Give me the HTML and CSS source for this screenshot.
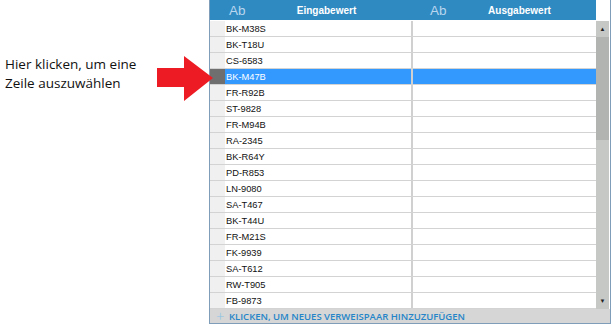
FILE: index.html
```html
<!DOCTYPE html>
<html lang="de">
<head>
    <meta charset="UTF-8">
    <title>Verweistabelle</title>
    <link rel="stylesheet" href="styles.css">
</head>
<body>

    <div class="page">
        <div class="note">
            <p>Hier klicken, um eine<br>Zeile auszuwählen</p>
        </div>

        <svg class="arrow" width="56" height="46" viewBox="0 0 56 46">
            <polygon points="0,12 27,12 27,0 56,22 27,45 27,31 0,31" fill="#ed1c24"/>
        </svg>

        <div class="grid">
            <div class="grid-head">
                <div class="head-cell col-in"><span class="ab">Ab</span><span class="head-title">Eingabewert</span></div>
                <div class="head-cell col-out"><span class="ab">Ab</span><span class="head-title">Ausgabewert</span></div>
                <div class="head-corner"></div>
            </div>
            <div class="grid-body">
                <div class="rows">
                    <div class="row"><span class="gutter"></span><span class="cell col-in">BK-M38S</span><span class="cell col-out"></span></div>
                    <div class="row"><span class="gutter"></span><span class="cell col-in">BK-T18U</span><span class="cell col-out"></span></div>
                    <div class="row"><span class="gutter"></span><span class="cell col-in">CS-6583</span><span class="cell col-out"></span></div>
                    <div class="row selected"><span class="gutter"></span><span class="cell col-in">BK-M47B</span><span class="cell col-out"></span></div>
                    <div class="row"><span class="gutter"></span><span class="cell col-in">FR-R92B</span><span class="cell col-out"></span></div>
                    <div class="row"><span class="gutter"></span><span class="cell col-in">ST-9828</span><span class="cell col-out"></span></div>
                    <div class="row"><span class="gutter"></span><span class="cell col-in">FR-M94B</span><span class="cell col-out"></span></div>
                    <div class="row"><span class="gutter"></span><span class="cell col-in">RA-2345</span><span class="cell col-out"></span></div>
                    <div class="row"><span class="gutter"></span><span class="cell col-in">BK-R64Y</span><span class="cell col-out"></span></div>
                    <div class="row"><span class="gutter"></span><span class="cell col-in">PD-R853</span><span class="cell col-out"></span></div>
                    <div class="row"><span class="gutter"></span><span class="cell col-in">LN-9080</span><span class="cell col-out"></span></div>
                    <div class="row"><span class="gutter"></span><span class="cell col-in">SA-T467</span><span class="cell col-out"></span></div>
                    <div class="row"><span class="gutter"></span><span class="cell col-in">BK-T44U</span><span class="cell col-out"></span></div>
                    <div class="row"><span class="gutter"></span><span class="cell col-in">FR-M21S</span><span class="cell col-out"></span></div>
                    <div class="row"><span class="gutter"></span><span class="cell col-in">FK-9939</span><span class="cell col-out"></span></div>
                    <div class="row"><span class="gutter"></span><span class="cell col-in">SA-T612</span><span class="cell col-out"></span></div>
                    <div class="row"><span class="gutter"></span><span class="cell col-in">RW-T905</span><span class="cell col-out"></span></div>
                    <div class="row"><span class="gutter"></span><span class="cell col-in">FB-9873</span><span class="cell col-out"></span></div>
                </div>
                <div class="scrollbar">
                    <div class="scroll-btn">&#9650;</div>
                    <div class="scroll-thumb"></div>
                    <div class="scroll-track"></div>
                    <div class="scroll-btn">&#9660;</div>
                </div>
            </div>
            <div class="grid-foot">
                <span class="plus">+</span>
                <span class="add-text">KLICKEN, UM NEUES VERWEISPAAR HINZUZUFÜGEN</span>
            </div>
        </div>
    </div>

</body>
</html>
```

FILE: styles.css
```css
body {
    margin: 0;
    background-color: white;
    font-family: "Liberation Sans", Arial, sans-serif;
}
.page {
    position: relative;
    display: flex;
    width: 612px;
    height: 325px;
}
.note {
    width: 209px;
    flex-shrink: 0;
    padding-top: 55px;
    box-sizing: border-box;
}
.note p {
    margin: 0 0 0 5px;
    font-family: "Open Sans", sans-serif;
    font-size: 13.5px;
    line-height: 19px;
    color: #111;
}
.arrow {
    position: absolute;
    left: 157px;
    top: 56px;
}
.grid {
    width: 402px;
    height: 324px;
    border: 1px solid #7f9db9;
    border-top: none;
    box-sizing: border-box;
    display: flex;
    flex-direction: column;
}
.grid-head {
    display: flex;
    height: 21px;
    flex-shrink: 0;
}
.head-cell {
    display: flex;
    align-items: center;
    height: 20px;
    background-color: #2f8ac2;
    color: white;
}
.head-cell.col-in {
    width: 201px;
}
.head-cell.col-out {
    width: 185px;
}
.ab {
    width: 32px;
    padding-left: 19px;
    box-sizing: border-box;
    font-size: 13.5px;
    color: #b9d6ee;
}
.head-title {
    flex: 1;
    text-align: center;
    font-size: 10px;
    font-weight: bold;
}
.head-corner {
    flex: 1;
}
.grid-body {
    display: flex;
    flex: 1;
    overflow: hidden;
}
.rows {
    width: 386px;
    overflow: hidden;
}
.row {
    display: flex;
    height: 16px;
    border-bottom: 1px solid #d3d3d3;
    box-sizing: border-box;
    font-size: 9.3px;
    color: #111;
}
.gutter {
    width: 15px;
    background-color: #f0f0f0;
}
.cell {
    display: flex;
    align-items: center;
    padding-left: 1px;
}
.cell.col-in {
    width: 185px;
    border-right: 2px solid #d0d0d0;
}
.cell.col-out {
    flex: 1;
}
.row.selected {
    background-color: #3399ff;
    color: white;
}
.row.selected .gutter {
    background-color: #6f6f6f;
}
.scrollbar {
    width: 13px;
    display: flex;
    flex-direction: column;
    background-color: #c6c8c6;
}
.scroll-btn {
    height: 16px;
    font-size: 6px;
    line-height: 16px;
    text-align: center;
    color: #222;
}
.scroll-thumb {
    height: 103px;
    background-color: #b2b4b2;
}
.scroll-track {
    flex: 1;
}
.grid-foot {
    display: flex;
    align-items: center;
    height: 14px;
    flex-shrink: 0;
    background-color: #d6d6d6;
    font-family: "Open Sans", sans-serif;
}
.plus {
    width: 19px;
    padding-left: 6px;
    box-sizing: border-box;
    font-size: 15px;
    font-weight: 300;
    color: #8dc3e6;
}
.add-text {
    font-size: 9.5px;
    font-weight: 600;
    color: #2585c8;
}
```
